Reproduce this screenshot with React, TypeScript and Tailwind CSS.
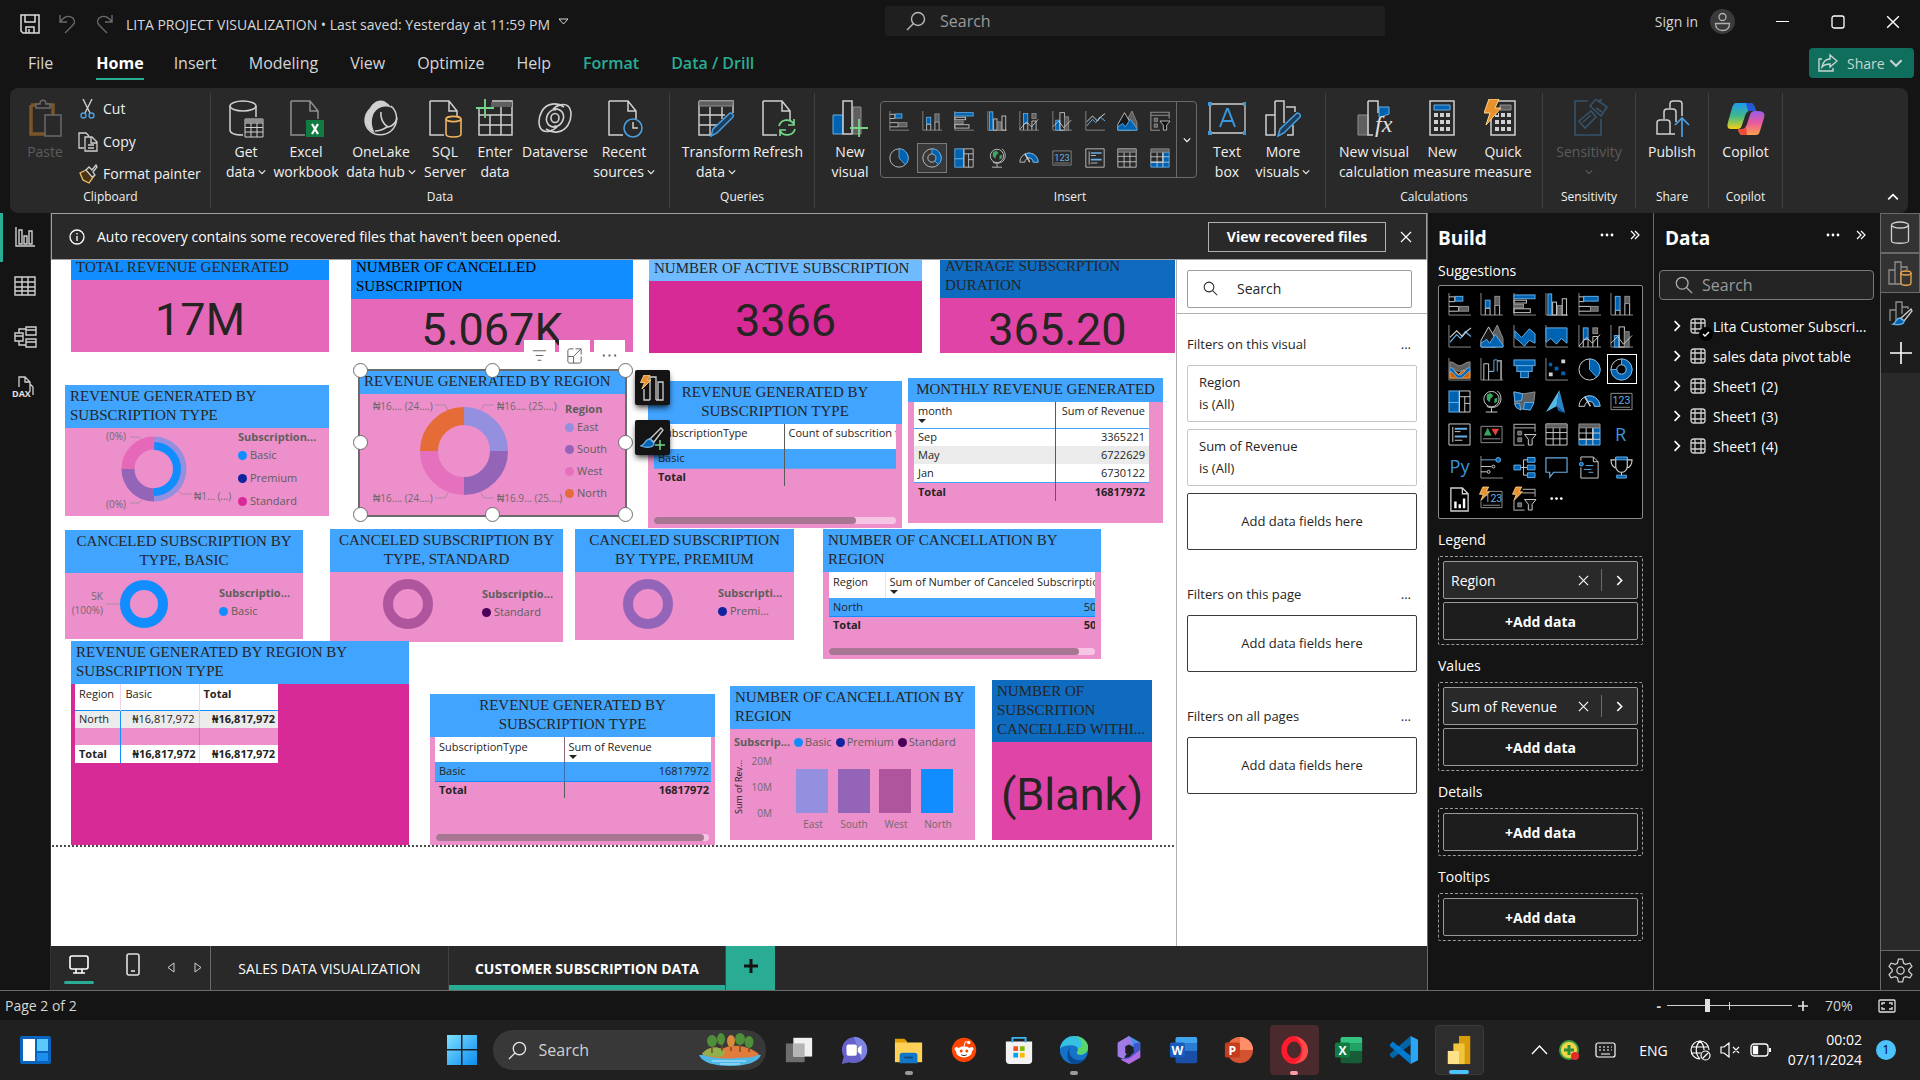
import React from "react";

const LIGHT = "#d0d0d0";
const GREY = "#8f8f8f";
const DARK = "#5f5f5f";
const BLUE = "#0063b1";
const SKY = "#69afe5";

/* ---------- small stroke icons ---------- */

function Chevron({ dir = "down", size = 8, className = "" }: { dir?: "down" | "up" | "left" | "right"; size?: number; className?: string }) {
  const d = { down: "M1 3l4 4 4-4", up: "M1 7l4-4 4 4", left: "M7 1L3 5l4 4", right: "M3 1l4 4-4 4" }[dir];
  return (
    <svg width={size} height={size} viewBox="0 0 10 10" fill="none" stroke="currentColor" strokeWidth="1.4" className={className} aria-hidden="true">
      <path d={d} />
    </svg>
  );
}

function Cross({ size = 12 }: { size?: number }) {
  return (
    <svg width={size} height={size} viewBox="0 0 12 12" fill="none" stroke="currentColor" strokeWidth="1.2" aria-hidden="true">
      <path d="M1 1l10 10M11 1L1 11" />
    </svg>
  );
}

function Lens({ size = 18, flip = false }: { size?: number; flip?: boolean }) {
  return (
    <svg width={size} height={size} viewBox="0 0 20 20" fill="none" stroke="currentColor" strokeWidth="1.4" aria-hidden="true">
      {flip ? (
        <>
          <circle cx="12" cy="8" r="6.5" />
          <path d="M7.5 12.5L1 19" />
        </>
      ) : (
        <>
          <circle cx="8" cy="8" r="6.5" />
          <path d="M12.5 12.5L19 19" />
        </>
      )}
    </svg>
  );
}

function Bolt({ x = 0, y = 0 }: { x?: number; y?: number }) {
  return <path transform={`translate(${x} ${y})`} d="M4 0h6L7.5 5H11L2 14l2.5-6.5H0.5z" fill="#e8912d" stroke="#ffd58f" strokeWidth=".9" />;
}

/* ---------- visual gallery icons, 24 x 24 ---------- */

const axis = <path d="M1 0v23h23" fill="none" stroke={GREY} />;

const VISUALS: Record<string, React.ReactNode> = {
  "Stacked bar chart": (
    <>
      {axis}
      <path d="M1 4h6v5H1M1 14h10v5H1" fill="none" stroke={LIGHT} />
      <rect x="7.500" y="3.500" width="8" height="5" fill={BLUE} stroke={SKY} />
      <rect x="11.500" y="14" width="10" height="5" fill={DARK} stroke={GREY} />
    </>
  ),
  "Stacked column chart": (
    <>
      {axis}
      <path d="M5.500 23v-7h5v7M15.500 23V13h5v10" fill="none" stroke={LIGHT} />
      <rect x="5.500" y="7.500" width="5" height="8" fill={BLUE} stroke={SKY} />
      <rect x="15.500" y="3.500" width="5" height="9.500" fill={DARK} stroke={GREY} />
    </>
  ),
  "Clustered bar chart": (
    <>
      {axis}
      <rect x="1" y="2" width="22" height="4" fill={BLUE} stroke={SKY} />
      <rect x="1" y="7.500" width="13" height="3" fill="none" stroke={LIGHT} />
      <rect x="1" y="12" width="10" height="3.500" fill={DARK} stroke={GREY} />
      <rect x="1" y="16.500" width="17" height="4" fill="none" stroke={LIGHT} />
    </>
  ),
  "Clustered column chart": (
    <>
      {axis}
      <rect x="3" y="1" width="4" height="22" fill={BLUE} stroke={SKY} />
      <rect x="8" y="9.500" width="4" height="13.500" fill="none" stroke={LIGHT} />
      <rect x="13" y="13" width="4" height="10" fill={DARK} stroke={GREY} />
      <rect x="18" y="6" width="4.500" height="17" fill="none" stroke={LIGHT} />
    </>
  ),
  "100% stacked bar chart": (
    <>
      {axis}
      <path d="M1 4h5v5H1M1 14h12v5H1" fill="none" stroke={LIGHT} />
      <rect x="6" y="3.500" width="15" height="5" fill={BLUE} stroke={SKY} />
      <rect x="13" y="14" width="8" height="5" fill={DARK} stroke={GREY} />
    </>
  ),
  "100% stacked column chart": (
    <>
      {axis}
      <path d="M5.500 23v-5h5v5M15.500 23V11h5v12" fill="none" stroke={LIGHT} />
      <rect x="5.500" y="3.500" width="5" height="14.500" fill={BLUE} stroke={SKY} />
      <rect x="15.500" y="3.500" width="5" height="7.500" fill={DARK} stroke={GREY} />
    </>
  ),
  "Line chart": (
    <>
      {axis}
      <path d="M2 18l7-8 4 4 5-7 6 5" fill="none" stroke={SKY} strokeWidth="1.2" />
      <path d="M2 13l7-7 6 6 4-5 5-4" fill="none" stroke={LIGHT} strokeWidth="1.2" />
    </>
  ),
  "Area chart": (
    <>
      <path d="M12 11l6-11 6 14v9H12z" fill={DARK} stroke={GREY} />
      <path d="M1 16L9 2l7 12v9H1z" fill="#181818" stroke={LIGHT} />
      <path d="M1 23v-4l6-4 3 4 6-9 8 11v2z" fill={BLUE} stroke={SKY} />
    </>
  ),
  "Stacked area chart": (
    <>
      {axis}
      <path d="M2 6l7 7 8-9 6 5v10l-6-3-5 6-10-9z" fill={BLUE} stroke={SKY} />
    </>
  ),
  "100% stacked area chart": (
    <>
      {axis}
      <path d="M1 3h22v16l-6-5-5 6-6-6-5 4z" fill={BLUE} stroke={SKY} />
    </>
  ),
  "Line and stacked column chart": (
    <>
      {axis}
      <path d="M5.500 23V15h5v8M15.500 23V12h5v11" fill="none" stroke={LIGHT} />
      <rect x="5.500" y="3" width="5" height="12" fill={BLUE} stroke={SKY} />
      <rect x="15.500" y="3" width="5" height="6" fill={DARK} stroke={GREY} />
      <path d="M1 22l8-9 6 6 8-9" fill="none" stroke={LIGHT} />
    </>
  ),
  "Line and clustered column chart": (
    <>
      {axis}
      <rect x="4.500" y="11" width="5" height="12" fill={BLUE} stroke={SKY} />
      <rect x="9.500" y="2" width="5.500" height="21" fill="none" stroke={LIGHT} />
      <rect x="15" y="7" width="5" height="16" fill={DARK} stroke={GREY} />
      <path d="M1 19l7-7 6 8 9-9" fill="none" stroke={LIGHT} />
    </>
  ),
  "Ribbon chart": (
    <>
      {axis}
      <path d="M2 4c5 0 6 4 10 4s6-4 11-4v6c-5 0-6 4-11 4S7 10 2 10z" fill={DARK} stroke={GREY} />
      <path d="M2 13h5l4 4 5-4h7v8H2z" fill="#c8640a" stroke="#ffb25c" />
      <path d="M2 10c5 0 5 8 10 8s6-8 11-8v4c-4 0-6 7-11 7S7 14 2 14z" fill={BLUE} stroke={SKY} />
    </>
  ),
  "Waterfall chart": (
    <>
      {axis}
      <path d="M4 23V6h5v8h5M9 14v9" fill="none" stroke={LIGHT} />
      <path d="M10.500 14h4V2h3.500v12" fill="none" stroke={SKY} />
      <path d="M18 3h4v20" fill="none" stroke={GREY} strokeWidth="2" />
    </>
  ),
  Funnel: (
    <>
      <rect x="1" y="2" width="22" height="6" fill={BLUE} stroke={SKY} />
      <rect x="4" y="8" width="16" height="6" fill={BLUE} stroke={SKY} />
      <rect x="8" y="14" width="8" height="6.500" fill={BLUE} stroke={SKY} />
    </>
  ),
  "Scatter chart": (
    <>
      {axis}
      <path d="M4 5h3.500v3.500H4zM10 9h4v4h-4zM17 14h4v4h-4z" fill={BLUE} />
      <path d="M17 1.500h4v4h-4zM4 15h4v4H4z" fill={LIGHT} />
    </>
  ),
  "Pie chart": (
    <>
      <circle cx="12" cy="12" r="11" fill="none" stroke={LIGHT} />
      <path d="M12 1a11 11 0 0 1 7.500 19L12 12z" fill={BLUE} stroke={SKY} />
    </>
  ),
  "Donut chart": (
    <>
      <circle cx="12" cy="12" r="11" fill="none" stroke={LIGHT} />
      <circle cx="12" cy="12" r="5" fill="none" stroke={LIGHT} />
      <path d="M12 1a11 11 0 1 1-11 11h6a5 5 0 1 0 5-5z" fill={BLUE} stroke={SKY} />
    </>
  ),
  "Donut outline": (
    <>
      <circle cx="12" cy="12" r="11" fill="none" stroke={LIGHT} />
      <circle cx="12" cy="12" r="5" fill="none" stroke={LIGHT} />
      <path d="M12 1a11 11 0 0 1 7.500 19l-4-4.500A5 5 0 0 0 12 7z" fill={BLUE} stroke={SKY} />
    </>
  ),
  Treemap: (
    <>
      <rect x="1" y="1" width="10.500" height="12" fill={BLUE} stroke={SKY} />
      <rect x="1" y="13" width="10.500" height="10" fill={BLUE} stroke={SKY} />
      <path d="M12 1h11v22H12zM12 7h11M17.500 7v16M17.500 14H23" fill="none" stroke={LIGHT} />
    </>
  ),
  Map: (
    <>
      <circle cx="12" cy="9.500" r="8" fill="none" stroke={LIGHT} />
      <path d="M7 5l4-2 3 3-3 3-1 4-3-3zM15 9l3-1v4l-3 2z" fill="#3ba55c" />
      <path d="M18 1c5 4 5 11 1 15-4 3-9 3-12 1M12 19v4M6 23h12" fill="none" stroke={LIGHT} />
    </>
  ),
  "Filled map": (
    <>
      <path d="M1 2l10 2 12-2-1 9-4 9H7L2 16z" fill={DARK} stroke={GREY} />
      <path d="M1 2l9 2-1 7-7 1zM12 13h10l-4 8-7-1z" fill={BLUE} stroke={SKY} />
      <path d="M2 14h5l1 7-5-3z" fill={BLUE} stroke={SKY} />
    </>
  ),
  "Azure map": (
    <>
      <path d="M15 0L1 23l11-6z" fill="#53b9e6" />
      <path d="M15 0l6 24-9-7z" fill="#2a86c8" />
      <path d="M12 17l9 7-7-2z" fill="#0f5fa6" />
    </>
  ),
  Gauge: (
    <>
      <path d="M1 17a11 11 0 0 1 22 0h-6a5 5 0 0 0-10 0z" fill="none" stroke={LIGHT} />
      <path d="M7 7.500A11 11 0 0 1 23 17h-6a5 5 0 0 0-7-5z" fill={BLUE} stroke={SKY} />
      <path d="M7 7l6 10" stroke={LIGHT} strokeWidth="1.600" />
    </>
  ),
  Card: (
    <>
      <path d="M1 3.500h22v17H1z" fill="none" stroke={GREY} />
      <path d="M3 18h18" stroke={GREY} />
      <text x="12" y="15" textAnchor="middle" fontSize="11" fontFamily="Roboto, sans-serif" fill={SKY}>123</text>
    </>
  ),
  "Multi-row card": (
    <>
      <path d="M1 1h22v22H1zM5 4v16M7 9h6M7 18h8" fill="none" stroke={LIGHT} />
      <path d="M7 6h13M7 14h13" fill="none" stroke={SKY} strokeWidth="2" />
    </>
  ),
  KPI: (
    <>
      <path d="M1 3.500h22v17H1zM3 16.500h18" fill="none" stroke={GREY} />
      <path d="M8 5l4 8H4z" fill="#3ba55c" />
      <path d="M12 6h8l-4 7z" fill="#e8413c" />
    </>
  ),
  Slicer: (
    <>
      <path d="M23 9V1.500H1V23h11M1 5h22" fill="none" stroke={GREY} strokeWidth="1.300" />
      <path d="M5 8.500h4v4H5zM5 15.500h4v4H5z" fill={DARK} stroke={GREY} />
      <path d="M12 12h12l-4 5v6h-4v-6z" fill="#111" stroke={LIGHT} />
    </>
  ),
  Table: (
    <>
      <path d="M1 1h22v22H1zM1 10h22M1 16.500h22M8.500 5v18M15.500 5v18" fill="none" stroke={LIGHT} />
      <path d="M1 1h22v4H1z" fill={DARK} stroke={GREY} />
    </>
  ),
  Matrix: (
    <>
      <path d="M15.500 5H23v18H1v-6h14.500z" fill={BLUE} stroke={SKY} />
      <path d="M1 5v12h14.500V5M1 10.500h22M8.500 5v18M1 17h22M15.500 5v18" fill="none" stroke={LIGHT} />
      <path d="M1 1h22v4H1z" fill={DARK} stroke={GREY} />
    </>
  ),
  "R script visual": (
    <text x="11" y="19" textAnchor="middle" fontSize="19" fontFamily="Open Sans, sans-serif" fill="#3a96dd">R</text>
  ),
  "Python visual": (
    <text x="12" y="18" textAnchor="middle" fontSize="19" fontFamily="Open Sans, sans-serif" fill="#3a96dd">Py</text>
  ),
  "Key influencers": (
    <>
      {axis}
      <path d="M1 4h16" stroke={SKY} />
      <circle cx="19" cy="4" r="2.500" fill={BLUE} stroke={SKY} />
      <path d="M1 11h11M1 16.500h6" stroke={LIGHT} />
      <circle cx="14" cy="11" r="1.500" fill="none" stroke={LIGHT} />
      <circle cx="9" cy="16.500" r="1.500" fill="none" stroke={LIGHT} />
    </>
  ),
  "Decomposition tree": (
    <>
      <path d="M8 12h7M11 4v16M11 4h4M11 20h4" fill="none" stroke={LIGHT} />
      <path d="M1 9.500h7v5H1zM15 1.500h8v5h-8zM15 9.500h8v5h-8zM15 17.500h8v5h-8z" fill={BLUE} stroke={SKY} />
    </>
  ),
  "Q&A": <path d="M1 2h22v15H9l-4 5v-5H1z" fill="none" stroke={SKY} strokeWidth="1.200" />,
  Narrative: (
    <>
      <path d="M3 5V1h13l5 5v17H3V12M16 1v5h5" fill="none" stroke={LIGHT} />
      <circle cx="3.500" cy="8.500" r="2" fill={BLUE} stroke={SKY} />
      <path d="M8 10h8M6 14h8M11 17h5" stroke={SKY} />
    </>
  ),
  Metrics: (
    <>
      <path d="M6 2h12v9a6 6 0 0 1-12 0zM6 4H1c0 6 2 8 6 9M18 4h5c0 6-2 8-6 9M12 17v4" fill="none" stroke={LIGHT} strokeWidth="1.200" />
      <path d="M6 1h12v3H6zM7 20h10v3H7z" fill={BLUE} stroke={SKY} />
    </>
  ),
  "Paginated report": (
    <>
      <path d="M3 0h12l6 6v18H3zM15 0v6h6" fill="none" stroke={LIGHT} strokeWidth="1.400" />
      <path d="M6.500 14h2.500v7H6.500zM11 17h2.500v4H11zM15.500 11H18v10h-2.500z" fill="#fff" />
    </>
  ),
  "New card": (
    <>
      <path d="M9 3.500h14v17H1V14M3 18h18" fill="none" stroke={GREY} />
      <text x="14" y="15" textAnchor="middle" fontSize="11" fontFamily="Roboto, sans-serif" fill={SKY}>123</text>
      <Bolt x={-1} y={-1} />
    </>
  ),
  "New slicer": (
    <>
      <path d="M10 1.500h13V9M1 13v10h11M10 5h13" fill="none" stroke={GREY} strokeWidth="1.300" />
      <path d="M5 15.500h4v4H5z" fill={DARK} stroke={GREY} />
      <path d="M12 12h12l-4 5v6h-4v-6z" fill="#111" stroke={LIGHT} />
      <Bolt x={-1} y={-1} />
    </>
  ),
  "More visuals": (
    <g fill="#fff">
      <circle cx="7" cy="11" r="1.400" />
      <circle cx="12" cy="11" r="1.400" />
      <circle cx="17" cy="11" r="1.400" />
    </g>
  ),
};

function VisualIcon({ name, size }: { name: string; size: number }) {
  return (
    <svg width={size} height={size} viewBox="0 0 24 24" aria-hidden="true" overflow="visible">
      {VISUALS[name]}
    </svg>
  );
}

/* ---------- ribbon icons, 38 x 40 ---------- */

const page = <path d="M4 2h19l8 10v10M23 2v10h8M4 2v34h14" fill="none" stroke={LIGHT} strokeWidth="1.500" />;
const pencil = <path d="M14 37l2-7L33 14c3 0 4 3 3 4L20 34z" fill="#1c3f5f" stroke="#4a9fe0" strokeWidth="1.500" />;
const calc = (
  <>
    <path d="M7 2h24v34H7z" fill="none" stroke={LIGHT} strokeWidth="1.500" />
    <path d="M11 14h4v4h-4zM17 14h4v4h-4zM23 14h4v4h-4zM11 21h4v4h-4zM17 21h4v4h-4zM23 21h4v4h-4zM11 28h4v4h-4zM17 28h4v4h-4zM23 28h4v4h-4z" fill={LIGHT} />
  </>
);

const RIBBON: Record<string, React.ReactNode> = {
  paste: (
    <>
      <path d="M5 6h22v12M5 6v29h14" fill="none" stroke="#7a5529" strokeWidth="3.500" />
      <path d="M10 9V5h4c0-5 6-5 6 0h4v4z" fill="#292929" stroke="#6a6a6a" strokeWidth="1.500" />
      <path d="M19 16h16v21H19z" fill="#292929" stroke="#6a6a6a" strokeWidth="1.500" />
    </>
  ),
  getdata: (
    <>
      <path d="M3 7v24c0 3 5 5 13 5M29 7v11" fill="none" stroke={LIGHT} strokeWidth="1.500" />
      <ellipse cx="16" cy="7" rx="13" ry="5" fill="none" stroke={LIGHT} strokeWidth="1.500" />
      <path d="M18 20h18v18H18zM18 24h18M18 28.500h18M18 33h18M24 24v14M30 24v14" fill="none" stroke={LIGHT} />
      <path d="M18 20h18v4H18z" fill={GREY} />
    </>
  ),
  excel: (
    <>
      <path d="M4 2h19l8 10v8M23 2v10h8M4 2v34h14" fill="none" stroke={GREY} strokeWidth="1.500" />
      <path d="M19 21h18v17H19z" fill="#107c41" />
      <path d="M25 25l6 10M31 25l-6 10" stroke="#fff" strokeWidth="2.200" />
    </>
  ),
  onelake: (
    <>
      <path d="M8 10C2 16 1 26 8 32c5 5 15 5 21 0 8-7 7-19 0-25" fill="none" stroke={LIGHT} strokeWidth="1.600" />
      <path d="M7 11C10 3 17 0 22 2c4 2 8 7 8 7-8-3-14-1-18 5-3 6-3 13 1 20C4 31 0 20 7 11z" fill={LIGHT} />
      <path d="M19 13c-1 6 2 12 7 15 5-1 8-5 9-9M13 32c3 0 9-2 12-4" fill="none" stroke={LIGHT} strokeWidth="1.600" />
    </>
  ),
  sql: (
    <>
      {page}
      <path d="M20 20v15c0 4 15 4 15 0V20" fill="#292929" stroke="#f0b35e" strokeWidth="1.600" />
      <ellipse cx="27.500" cy="20" rx="7.500" ry="2.600" fill="#292929" stroke="#f0b35e" strokeWidth="1.600" />
    </>
  ),
  enter: (
    <>
      <path d="M3 10v26h33V2H16M3 16h33M3 26h33M14 16v20M25 8v28" fill="none" stroke={LIGHT} strokeWidth="1.500" />
      <path d="M15 3h21v5H15z" fill={DARK} />
      <path d="M9 0v19M0 9h18" stroke="#74d88a" strokeWidth="1.800" />
    </>
  ),
  dataverse: (
    <g fill="none" stroke={LIGHT} strokeWidth="1.600">
      <path d="M28 8C21 3 11 4 6 12c-4 7-4 15 0 19 4 3 11 1 15-3" />
      <path d="M10 30c7 5 17 4 22-4 4-7 4-15 0-19-4-3-11-1-15 3" />
      <path d="M21 28c-9 1-13-6-9-13 2-3 5-5 8-4" />
      <path d="M17 10c9-1 13 6 9 13-2 3-5 5-8 4" />
      <ellipse cx="19" cy="19" rx="4" ry="4.500" />
    </g>
  ),
  recent: (
    <>
      {page}
      <circle cx="28" cy="29" r="9" fill="#292929" stroke="#4a9fe0" strokeWidth="1.600" />
      <path d="M28 23v6h5" fill="none" stroke={LIGHT} strokeWidth="1.500" />
    </>
  ),
  transform: (
    <>
      <path d="M2 2h34v12M2 2v34h13M2 16h26M2 26h18M13 8v28M25 8v12" fill="none" stroke={LIGHT} strokeWidth="1.400" />
      <path d="M2 2h34v5H2z" fill={DARK} stroke={GREY} />
      {pencil}
    </>
  ),
  refresh: (
    <>
      {page}
      <path d="M20 27c2-7 11-8 15-2M35 20v6h-6M36 30c-2 7-11 8-15 2M21 37v-6h6" fill="none" stroke="#74d88a" strokeWidth="1.700" />
    </>
  ),
  newvisual: (
    <>
      <path d="M22 8h8v27h-8z" fill={DARK} stroke={GREY} />
      <path d="M2 16h10v19H2z" fill={BLUE} stroke={SKY} />
      <path d="M12 2h9v33h-9z" fill="#292929" stroke={LIGHT} strokeWidth="1.500" />
      <path d="M28 20v18M19 29h18" stroke="#74d88a" strokeWidth="1.800" />
    </>
  ),
  textbox: (
    <>
      <path d="M2 5h35v29H2z" fill="none" stroke={LIGHT} strokeWidth="1.300" />
      <path d="M0 3h4v4H0zM35 3h4v4h-4zM0 32h4v4H0zM35 32h4v4h-4z" fill="#3a96dd" />
      <path d="M12 28l7-18h1l7 18M14.500 22h10" fill="none" stroke="#3a96dd" strokeWidth="2" />
    </>
  ),
  morevisuals: (
    <>
      <path d="M2 16h9v20H2zM11 2h9v22M11 16V2M22 8h9v5M29 26v10h-6" fill="none" stroke={LIGHT} strokeWidth="1.500" />
      {pencil}
    </>
  ),
  newcalc: (
    <>
      <path d="M3 16h10v20H3z" fill={DARK} stroke={GREY} />
      <path d="M13 2h10v12M13 2v34h5" fill="none" stroke={LIGHT} strokeWidth="1.500" />
      <path d="M24 8h10v7l-8 3h-2z" fill={BLUE} stroke={SKY} />
      <text x="20" y="33" fontSize="24" fontStyle="italic" fontFamily="Liberation Serif, serif" fill="#e0e0e0">fx</text>
    </>
  ),
  newmeasure: (
    <>
      {calc}
      <path d="M11 6h16v5H11z" fill={BLUE} stroke={SKY} />
    </>
  ),
  quick: (
    <>
      {calc}
      <path d="M16 6h11v5H16z" fill={DARK} stroke={GREY} />
      <path d="M0 0h14v16H6v10H0z" fill="#292929" />
      <path d="M5 0h10l-4 9h6L2 26l4-12H0z" fill="#e8912d" stroke="#ffd58f" />
    </>
  ),
  sensitivity: (
    <g fill="none" stroke="#35536b" strokeWidth="1.600">
      <path d="M18 2H5v34h26V20" />
      <path d="M9 22l12-10 5 6-11 11zM13 23l8-7" />
      <path d="M20 7l6-7 11 8-6 9zM28 3l4-3M26 9l6 4" />
    </g>
  ),
  publish: (
    <>
      <path d="M4 35V24c0-2 1-3 3-3h7c2 0 3 1 3 3v11zM11 20v-7c0-2 1-3 3-3h6c2 0 3 1 3 3v10M17 35h5M17 9V5c0-2 1-3 3-3h6c2 0 3 1 3 3v12" fill="none" stroke={LIGHT} strokeWidth="1.500" />
      <path d="M29 38V19M22 26l7-7 7 7" fill="none" stroke="#4a9fe0" strokeWidth="1.700" />
    </>
  ),
  copilot: (
    <>
      <defs>
        <linearGradient id="cpA" x1="0" y1="0" x2="0" y2="1">
          <stop offset="0" stopColor="#1e9bf0" />
          <stop offset=".5" stopColor="#3fb98a" />
          <stop offset="1" stopColor="#f5d116" />
        </linearGradient>
        <linearGradient id="cpB" x1="0" y1="0" x2="0" y2="1">
          <stop offset="0" stopColor="#9a5bea" />
          <stop offset=".5" stopColor="#ea5a9b" />
          <stop offset="1" stopColor="#ffa14a" />
        </linearGradient>
      </defs>
      <path d="M9 4h14c3 0 4 2 5 5l1 3h-6c-3 0-4 2-5 5l-3 9c-1 3-2 4-5 4H4c-4 0-4-3-3-7L5 9c1-3 2-5 4-5z" fill="url(#cpA)" />
      <path d="M19 4h4c3 0 4 2 5 5l1 3h-8z" fill="#2458d6" />
      <path d="M30 12c8 0 8 3 7 7l-4 13c-1 3-2 4-4 4H16c-3 0-4-2-5-6h4c3 0 4-2 5-5l3-9c1-3 2-4 5-4z" fill="url(#cpB)" />
      <path d="M11 30h4c2 0 3-1 4-3l1 9h-4c-3 0-4-2-5-6z" fill="#f04b3a" />
    </>
  ),
};

function RibbonItem({ icon, lines, menu, width, dim }: { icon: string; lines: string[]; menu?: boolean; width: string; dim?: boolean }) {
  return (
    <button type="button" className={`flex flex-col items-center shrink-0 pt-[11px] ${width} ${dim ? "text-[#5c5c5c]" : "text-[#f0f0f0]"}`}>
      <svg width="38" height="40" viewBox="0 0 38 40" className="shrink-0" aria-hidden="true">
        {RIBBON[icon]}
      </svg>
      <span className="mt-[3px] flex flex-col items-center text-[14px] leading-[20px] whitespace-nowrap">
        {lines.map((l, i) => (
          <span key={l} className="flex items-center gap-[3px]">
            {l}
            {menu && i === lines.length - 1 && lines.length > 1 && <Chevron />}
          </span>
        ))}
        {menu && lines.length === 1 && <Chevron className="mt-[6px]" />}
      </span>
    </button>
  );
}

function RibbonGroup({ label, width, children }: { label: string; width: string; children: React.ReactNode }) {
  return (
    <section aria-label={label} className={`relative flex flex-col shrink-0 border-r border-[#404040] my-[5px] ${width}`}>
      <div className="flex -mt-[5px] h-[99px] justify-start">{children}</div>
      <div className="text-center text-[12px] leading-[20px] text-[#f0f0f0]">{label}</div>
    </section>
  );
}

const GALLERY = [
  "Stacked bar chart", "Stacked column chart", "Clustered bar chart", "Clustered column chart", "Line and stacked column chart", "Line and clustered column chart", "Line chart", "Area chart", "Slicer",
  "Pie chart", "Donut outline", "Treemap", "Map", "Gauge", "Card", "Multi-row card", "Table", "Matrix",
];

function TitleBar() {
  return (
    <header className="grid grid-cols-[885fr_500fr_535fr] h-[43px] items-start text-[#d6d6d6]">
      <div className="flex items-center h-[44px] pl-[20px] pt-1">
        <button type="button" aria-label="Save" className="w-[38px]">
          <svg width="20" height="20" viewBox="0 0 20 20" fill="none" stroke="#dcdcdc" strokeWidth="1.500">
            <path d="M1 1h18v18H3l-2-2zM5 1v7h10V1M6 19v-6h8v6M9 15v4" />
          </svg>
        </button>
        <button type="button" aria-label="Undo" className="w-[38px] text-[#6a6a6a]">
          <svg width="18" height="20" viewBox="0 0 18 20" fill="none" stroke="currentColor" strokeWidth="1.400">
            <path d="M2 1v7h7M2 8c4-6 9-7 13-4 3 4 1 6-1 8l-7 7" />
          </svg>
        </button>
        <button type="button" aria-label="Redo" className="w-[30px] text-[#6a6a6a]">
          <svg width="18" height="20" viewBox="0 0 18 20" fill="none" stroke="currentColor" strokeWidth="1.400">
            <path d="M16 1v7H9M16 8C12 2 7 1 3 4c-3 4-1 6 1 8l7 7" />
          </svg>
        </button>
        <button type="button" className="flex items-center gap-2 text-[14px] whitespace-nowrap">
          LITA PROJECT VISUALIZATION • Last saved: Yesterday at 11:59 PM
          <svg width="11" height="8" viewBox="0 0 11 8" fill="none" stroke="currentColor" className="-mt-1">
            <path d="M1 1h9L5.500 6z" />
          </svg>
        </button>
      </div>
      <label className="mt-[6px] flex h-[30px] items-center rounded-[2px] bg-[#1f1f1f] pl-[21px] text-[#b8b8b8]">
        <Lens size={20} flip />
        <input type="search" aria-label="Search commands" placeholder="Search" className="ml-[14px] min-w-0 flex-1 bg-transparent text-[16px] outline-none placeholder:text-[#9a9a9a]" />
      </label>
      <div className="flex h-[43px] items-center justify-end">
        <button type="button" className="mr-[12px] text-[14px]">Sign in</button>
        <button type="button" aria-label="Account" className="mr-[20px] flex size-[25px] items-center justify-center rounded-full bg-[#3a3a3a]">
          <svg width="17" height="20" viewBox="0 0 17 20" fill="none" stroke="#b0b0b0" strokeWidth="1.300">
            <circle cx="8.500" cy="5" r="3.500" />
            <path d="M1.500 11.500h14c0 5-3 7-7 7s-7-2-7-7z" />
          </svg>
        </button>
        <button type="button" aria-label="Minimize" className="flex w-[55px] justify-center">
          <svg width="13" height="13" viewBox="0 0 13 13" stroke="#fff"><path d="M0 6.500h13" /></svg>
        </button>
        <button type="button" aria-label="Maximize" className="flex w-[55px] justify-center">
          <svg width="14" height="14" viewBox="0 0 14 14" fill="none" stroke="#fff" strokeWidth="1.300"><rect x="1" y="1" width="12" height="12" rx="2" /></svg>
        </button>
        <button type="button" aria-label="Close" className="flex w-[55px] justify-center text-white">
          <Cross size={14} />
        </button>
      </div>
    </header>
  );
}

function TabStrip() {
  const tabs = ["File", "Home", "Insert", "Modeling", "View", "Optimize", "Help", "Format", "Data / Drill"];
  return (
    <nav aria-label="Ribbon tabs" className="flex h-[45px] items-start pl-[28px] pr-[6px]">
      {tabs.map((t) => (
        <a
          key={t}
          href={`#${t}`}
          className={
            t === "Home"
              ? "ml-[11px] mr-[30px] border-b-2 border-[#2aac94] pt-[7px] pb-[2px] text-[16px] leading-[26px] font-bold text-white"
              : t === "Format" || t === "Data / Drill"
                ? "mr-[32px] pt-[7px] text-[16px] leading-[26px] font-semibold text-[#2aac94]"
                : "mr-[32px] pt-[7px] text-[16px] leading-[26px] text-[#d6d6d6]"
          }
        >
          {t}
        </a>
      ))}
      <button type="button" className="ml-auto mt-[5px] flex h-[30px] w-[105px] items-center rounded-[4px] bg-[#0f6e5c] pl-[9px] text-[14px] text-[#c8d6d2]">
        <svg width="20" height="20" viewBox="0 0 20 20" fill="none" stroke="currentColor" strokeWidth="1.400">
          <path d="M4 6H1v12h14v-3M12 2l7 6-7 6v-3c-4 0-6 1-8 3 1-5 4-8 8-8z" />
        </svg>
        <span className="ml-[9px] mr-[4px]">Share</span>
        <Chevron size={14} />
      </button>
    </nav>
  );
}

function Ribbon() {
  return (
    <div className="ml-[10px] mr-[12px] flex h-[125px] rounded-[8px] bg-[#292929] pl-px">
      <RibbonGroup label="Clipboard" width="w-[200px]">
        <span className="w-px shrink-0" />
        <RibbonItem icon="paste" lines={["Paste"]} width="w-[66px]" dim />
        <div className="flex flex-col pt-px text-[14px] leading-[20px] text-[#f0f0f0]">
          <button type="button" className="flex h-[33px] items-center gap-[5px] pt-[6px]">
            <svg width="20" height="20" viewBox="0 0 20 20" fill="none" strokeWidth="1.400">
              <path d="M5 0l7 14M14 0L7 14" stroke={LIGHT} />
              <circle cx="5.500" cy="16.500" r="2.500" stroke="#4a9fe0" />
              <circle cx="13.500" cy="16.500" r="2.500" stroke="#4a9fe0" />
            </svg>
            Cut
          </button>
          <button type="button" className="flex h-[33px] items-center gap-[5px] pt-[6px]">
            <svg width="20" height="20" viewBox="0 0 20 20" fill="none" stroke={LIGHT} strokeWidth="1.300">
              <path d="M6 16H1V1h7l3 3M7 5h7l5 5v9H7zM13 5v6h6M10 13h6M10 16h6" />
            </svg>
            Copy
          </button>
          <button type="button" className="flex h-[32px] items-center gap-[5px] pt-[6px] whitespace-nowrap">
            <svg width="20" height="20" viewBox="0 0 20 20" fill="none" strokeWidth="1.300">
              <path d="M2 9l8-4 6 7-5 7-6-3z" fill="#4a3413" stroke="#f3c06a" />
              <path d="M8 6l3-3 3 3 4-5 1 2-4 5 2 3-3 2z" fill="#292929" stroke={LIGHT} />
            </svg>
            Format painter
          </button>
        </div>
      </RibbonGroup>
      <RibbonGroup label="Data" width="w-[459px]">
        <span className="w-[5px] shrink-0" />
        <RibbonItem icon="getdata" lines={["Get", "data"]} menu width="w-[60px]" />
        <RibbonItem icon="excel" lines={["Excel", "workbook"]} width="w-[60px]" />
        <RibbonItem icon="onelake" lines={["OneLake", "data hub"]} menu width="w-[90px]" />
        <RibbonItem icon="sql" lines={["SQL", "Server"]} width="w-[38px]" />
        <RibbonItem icon="enter" lines={["Enter", "data"]} width="w-[62px]" />
        <RibbonItem icon="dataverse" lines={["Dataverse"]} width="w-[58px]" />
        <RibbonItem icon="recent" lines={["Recent", "sources"]} menu width="w-[80px]" />
      </RibbonGroup>
      <RibbonGroup label="Queries" width="w-[145px]">
        <span className="w-[4px] shrink-0" />
        <RibbonItem icon="transform" lines={["Transform", "data"]} menu width="w-[84px]" />
        <RibbonItem icon="refresh" lines={["Refresh"]} width="w-[40px]" />
      </RibbonGroup>
      <RibbonGroup label="Insert" width="w-[511px]">
        <span className="w-[5px] shrink-0" />
        <RibbonItem icon="newvisual" lines={["New", "visual"]} width="w-[60px]" />
        <div className="mt-[13px] flex h-[77px] w-[317px] shrink-0 rounded-[4px] border border-[#6a6a6a]">
          <div className="grid flex-1 grid-cols-9 grid-rows-2 py-px pl-[2px]">
            {GALLERY.map((g, i) => (
              <button
                key={g}
                type="button"
                aria-label={g}
                className={i === 10 ? "m-auto flex size-[30px] items-center justify-center border border-[#7a7a7a] bg-[#383838]" : "m-auto flex size-[30px] items-center justify-center"}
              >
                <VisualIcon name={g} size={20} />
              </button>
            ))}
          </div>
          <button type="button" aria-label="More visual types" className="flex w-[20px] items-center justify-center border-l border-[#6a6a6a] text-white">
            <Chevron />
          </button>
        </div>
        <RibbonItem icon="textbox" lines={["Text", "box"]} width="w-[60px]" />
        <RibbonItem icon="morevisuals" lines={["More", "visuals"]} menu width="w-[52px]" />
      </RibbonGroup>
      <RibbonGroup label="Calculations" width="w-[217px]">
        <span className="w-[5px] shrink-0" />
        <RibbonItem icon="newcalc" lines={["New visual", "calculation"]} width="w-[86px]" />
        <RibbonItem icon="newmeasure" lines={["New", "measure"]} width="w-[50px]" />
        <RibbonItem icon="quick" lines={["Quick", "measure"]} width="w-[72px]" />
      </RibbonGroup>
      <RibbonGroup label="Sensitivity" width="w-[93px]">
        <RibbonItem icon="sensitivity" lines={["Sensitivity"]} menu width="w-[92px]" dim />
      </RibbonGroup>
      <RibbonGroup label="Share" width="w-[73px]">
        <RibbonItem icon="publish" lines={["Publish"]} width="w-[72px]" />
      </RibbonGroup>
      <RibbonGroup label="Copilot" width="w-[74px]">
        <RibbonItem icon="copilot" lines={["Copilot"]} width="w-[73px]" />
      </RibbonGroup>
      <button type="button" aria-label="Collapse ribbon" className="mr-[9px] mb-[10px] ml-auto self-end text-white">
        <Chevron dir="up" size={12} />
      </button>
    </div>
  );
}

function LeftNav() {
  const items: [string, React.ReactNode][] = [
    ["Report view", <path key="a" d="M1 0v19h19M4 3h3v14H4zM9 9h3v8H9zM14 4h3v13h-3z" />],
    ["Table view", <path key="b" d="M1 1h20v18H1zM1 6h20M1 11h20M1 15h20M8 1v18M14 1v18" />],
    ["Model view", <path key="c" d="M12 1h10v8H12zM12 4h10M12 13h10v8H12zM12 16h10M1 7h8v8H1zM1 10h8M5 7V3h7M5 15v4h7" />],
  ];
  return (
    <nav aria-label="Views" className="w-[51px] shrink-0 border-r border-[#333] bg-[#141414]">
      {items.map(([label, icon], i) => (
        <button key={label} type="button" aria-label={label} className={i === 0 ? "flex h-[49px] w-full items-center border-l-[3px] border-[#2aac94] pl-[12px]" : "flex h-[50px] w-full items-center pl-[14px]"}>
          <svg width="23" height="22" viewBox="0 0 23 22" fill="none" stroke={LIGHT} strokeWidth="1.400">{icon}</svg>
        </button>
      ))}
      <button type="button" aria-label="DAX query view" className="flex h-[50px] w-full items-center pl-[12px]">
        <svg width="24" height="24" viewBox="0 0 24 24" fill="none" stroke={LIGHT} strokeWidth="1.300">
          <path d="M7 12V2h6l5 5v9M13 2v5h5M18 9l3 3v8" />
          <text x="0" y="22" fontSize="9" fontWeight="700" fontFamily="Open Sans, sans-serif" fill="#e0e0e0" stroke="none">DAX</text>
        </svg>
      </button>
    </nav>
  );
}

/* ---------- report canvas ---------- */

function Visual({ place, title, head = "bg-[#41a4ff]", body = "bg-[#ec8fcb]", center, black, children }: {
  place: string; title: string; head?: string; body?: string; center?: boolean; black?: boolean; children?: React.ReactNode;
}) {
  return (
    <article className={`absolute flex flex-col ${place} ${body}`}>
      <h2 className={`px-[5px] pt-[2px] pb-[3px] font-['Liberation_Serif',serif] text-[15px] leading-[19px] whitespace-pre ${head} ${center ? "text-center" : ""} ${black ? "text-black" : "text-[#252423]"}`}>
        {title}
      </h2>
      {children}
    </article>
  );
}

function Big({ children }: { children: React.ReactNode }) {
  return <p className="flex flex-1 items-center justify-center pt-[8px] font-[Roboto,sans-serif] text-[45px] leading-[46px] text-[#252423]">{children}</p>;
}

function Arc({ cx, cy, r, w, color, from = 0, span = 1 }: { cx: number; cy: number; r: number; w: number; color: string; from?: number; span?: number }) {
  const c = 2 * Math.PI * r;
  return <circle cx={cx} cy={cy} r={r} fill="none" stroke={color} strokeWidth={w} strokeDasharray={`${span * c} ${c}`} transform={`rotate(${from * 360 - 90} ${cx} ${cy})`} />;
}

function Legend({ title, items, className, gap }: { title: string; items: [string, string][]; className: string; gap: string }) {
  return (
    <div className={`text-[11px] leading-[16px] whitespace-nowrap text-[#605e5c] ${className}`}>
      <div className="font-bold">{title}</div>
      <ul className={`mt-[2px] flex flex-col ${gap}`}>
        {items.map(([name, dot]) => (
          <li key={name} className="flex items-center gap-[3px]">
            <span className={`size-[9px] rounded-full ${dot}`} />
            {name}
          </li>
        ))}
      </ul>
    </div>
  );
}

const label = { fontSize: 10, fill: "#706a6e", fontFamily: "Open Sans, sans-serif" };

function Scroll({ thumb }: { thumb: string }) {
  return (
    <div className="mx-[6px] mt-auto mb-[4px] h-[7px] rounded-full bg-[#f6c4e4]">
      <div className={`h-[7px] rounded-full bg-[#a87592] ${thumb}`} />
    </div>
  );
}

function SortMark() {
  return <span className="block h-0 w-[7px] border-x-[4px] border-t-[4px] border-x-transparent border-t-[#252423]" />;
}

function Canvas() {
  return (
    <main className="relative min-w-0 flex-1 overflow-hidden bg-white">
      <Visual place="left-[20px] top-[-4px] h-[96px] w-[258px]" title="TOTAL REVENUE GENERATED" head="bg-[#118dff]" body="bg-[#e669b9]">
        <Big>17M</Big>
      </Visual>
      <Visual place="left-[300px] top-[-4px] h-[96px] w-[282px]" title={"NUMBER OF CANCELLED\nSUBSCRIPTION"} head="bg-[#118dff]" body="bg-[#e669b9]" black>
        <Big>5.067K</Big>
      </Visual>
      <Visual place="left-[598px] top-[-3px] h-[96px] w-[273px]" title="NUMBER OF ACTIVE SUBSCRIPTION" head="bg-[#70bbff]" body="bg-[#d82a96]">
        <Big>3366</Big>
      </Visual>
      <Visual place="left-[889px] top-[-5px] h-[98px] w-[235px]" title={"AVERAGE SUBSCRPTION\nDURATION"} head="bg-[#0e6bc0]" body="bg-[#e044a7]">
        <Big>365.20</Big>
      </Visual>

      <Visual place="left-[14px] top-[125px] h-[131px] w-[264px]" title={"REVENUE GENERATED BY\nSUBSCRIPTION TYPE"}>
        <div className="flex flex-1">
          <svg width="173" height="88" viewBox="0 0 173 88" role="img" aria-label="Revenue by subscription type">
            <Arc cx={89} cy={41} r={26} w={13} color="#958fdf" from={0} span={0.5} />
            <Arc cx={89} cy={41} r={23} w={8} color="#118dff" from={0} span={0.5} />
            <Arc cx={89} cy={41} r={26} w={13} color="#9464b9" from={0.5} span={0.25} />
            <Arc cx={89} cy={41} r={26} w={13} color="#e569b8" from={0.75} span={0.25} />
            <path d="M65 9h9l3 3M65 75h9l3-3M127 66h-10l-4-3" fill="none" stroke="#b08aa4" />
            <text x="41" y="12" {...label}>(0%)</text>
            <text x="41" y="80" {...label}>(0%)</text>
            <text x="129" y="72" {...label}>₦1... (...)</text>
          </svg>
          <Legend title="Subscription..." className="pt-px" gap="gap-[7px]" items={[["Basic", "bg-[#118dff]"], ["Premium", "bg-[#12239e]"], ["Standard", "bg-[#d82a96]"]]} />
        </div>
      </Visual>

      <Visual place="left-[597px] top-[121px] h-[147px] w-[254px]" title={"REVENUE GENERATED BY\nSUBSCRIPTION TYPE"} center>
        <div className="mx-[6px] overflow-hidden">
          <table className="w-[290px] table-fixed border-collapse text-left text-[11px] leading-[16px] whitespace-nowrap text-[#252423]">
            <thead>
              <tr className="h-[25px] bg-white align-top">
                <th className="w-[130px] border-r border-[#5a5a5a] px-[4px] pt-px text-right font-normal">
                  <span className="block pr-[32px]">SubscriptionType</span>
                </th>
                <th className="px-[4px] pt-px font-normal">Count of subscrition type</th>
              </tr>
            </thead>
            <tbody>
              <tr className="h-[19px] border-b border-[#6f9fe8] bg-[#41a4ff]">
                <td className="border-r border-[#5a5a5a] px-[4px]">Basic</td>
                <td />
              </tr>
              <tr className="h-[18px] font-bold">
                <td className="border-r border-[#5a5a5a] px-[4px]">Total</td>
                <td />
              </tr>
            </tbody>
          </table>
        </div>
        <Scroll thumb="w-5/6" />
      </Visual>

      <Visual place="left-[857px] top-[118px] h-[145px] w-[255px]" title="MONTHLY REVENUE GENERATED" center>
        <table className="ml-[6px] w-[235px] table-fixed border-collapse text-left text-[11px] leading-[16px] text-[#252423]">
          <thead>
            <tr className="h-[26px] border-b border-[#41a4ff] bg-white align-top">
              <th className="w-[141px] border-r border-[#5a5a5a] px-[4px] pt-px font-normal">
                month
                <SortMark />
              </th>
              <th className="px-[4px] pt-px text-right font-normal whitespace-nowrap">Sum of Revenue</th>
            </tr>
          </thead>
          <tbody>
            {[["Sep", "3365221"], ["May", "6722629"], ["Jan", "6730122"]].map(([m, v], i) => (
              <tr key={m} className={i === 1 ? "h-[18px] bg-[#ebebeb]" : "h-[18px] bg-white"}>
                <td className="border-r border-[#5a5a5a] px-[4px]">{m}</td>
                <td className="px-[4px] text-right">{v}</td>
              </tr>
            ))}
            <tr className="h-[19px] border-t border-[#41a4ff] font-bold">
              <td className="border-r border-[#5a5a5a] px-[4px]">Total</td>
              <td className="px-[4px] text-right">16817972</td>
            </tr>
          </tbody>
        </table>
      </Visual>

      <Visual place="left-[14px] top-[270px] h-[109px] w-[238px]" title={"CANCELED SUBSCRIPTION BY\nTYPE, BASIC"} center>
        <div className="flex flex-1">
          <svg width="154" height="66" viewBox="0 0 154 66" role="img" aria-label="Cancelled, basic">
            <Arc cx={79} cy={31} r={19} w={10} color="#118dff" />
            <path d="M41 31h14" stroke="#b08aa4" />
            <text x="38" y="27" textAnchor="end" {...label}>5K</text>
            <text x="38" y="41" textAnchor="end" {...label}>(100%)</text>
          </svg>
          <Legend title="Subscriptio..." className="pt-[12px]" gap="gap-0" items={[["Basic", "bg-[#118dff]"]]} />
        </div>
      </Visual>
      <Visual place="left-[279px] top-[269px] h-[113px] w-[233px]" title={"CANCELED SUBSCRIPTION BY\nTYPE, STANDARD"} center>
        <div className="flex flex-1">
          <svg width="152" height="70" viewBox="0 0 152 70" role="img" aria-label="Cancelled, standard">
            <Arc cx={78} cy={32} r={20} w={10} color="#ae559e" />
          </svg>
          <Legend title="Subscriptio..." className="pt-[14px]" gap="gap-0" items={[["Standard", "bg-[#4b0058]"]]} />
        </div>
      </Visual>
      <Visual place="left-[524px] top-[269px] h-[111px] w-[219px]" title={"CANCELED SUBSCRIPTION\nBY TYPE, PREMIUM"} center>
        <div className="flex flex-1">
          <svg width="143" height="68" viewBox="0 0 143 68" role="img" aria-label="Cancelled, premium">
            <Arc cx={73} cy={32} r={20} w={10} color="#9464b9" />
          </svg>
          <Legend title="Subscripti..." className="pt-[13px]" gap="gap-0" items={[["Premi...", "bg-[#12239e]"]]} />
        </div>
      </Visual>

      <Visual place="left-[772px] top-[269px] h-[130px] w-[278px]" title={"NUMBER OF CANCELLATION BY\nREGION"}>
        <div className="mx-[6px] overflow-hidden">
          <table className="w-[300px] table-fixed border-collapse text-left text-[11px] leading-[16px] whitespace-nowrap text-[#252423]">
            <thead>
              <tr className="h-[26px] bg-white align-top">
                <th className="w-[56px] border-r border-[#f6dcec] px-[4px] pt-[2px] font-normal">Region</th>
                <th className="overflow-hidden px-[4px] pt-[2px] font-normal">
                  Sum of Number of Canceled Subscrirption
                  <SortMark />
                </th>
              </tr>
            </thead>
            <tbody>
              <tr className="h-[18px] border-b border-[#118dff] bg-[#41a4ff]">
                <td className="px-[4px]">North</td>
                <td className="pr-[20px] text-right">5067</td>
              </tr>
              <tr className="h-[18px] font-bold">
                <td className="px-[4px]">Total</td>
                <td className="pr-[20px] text-right">5067</td>
              </tr>
            </tbody>
          </table>
        </div>
        <Scroll thumb="w-[94%]" />
      </Visual>

      <Visual place="left-[20px] top-[381px] h-[204px] w-[338px]" title={"REVENUE GENERATED BY REGION BY\nSUBSCRIPTION TYPE"} body="bg-[#d82a96]">
        <table className="ml-[4px] w-[203px] table-fixed border-collapse text-left text-[11px] leading-[16px] text-[#252423]">
          <thead>
            <tr className="h-[26px] border-b border-[#118dff] bg-white align-top">
              <th className="w-[45px] border-r border-[#f3d3e7] px-[4px] pt-[2px] font-normal">Region</th>
              <th className="w-[79px] border-r border-[#f3d3e7] px-[5px] pt-[2px] font-normal">Basic</th>
              <th className="px-[4px] pt-[2px]">Total</th>
            </tr>
          </thead>
          <tbody>
            <tr className="h-[18px] bg-[#ebebeb]">
              <td className="border-r border-[#118dff] px-[4px]">North</td>
              <td className="border-r border-[#f3b3da] px-[4px] text-right">₦16,817,972</td>
              <td className="px-[3px] text-right font-bold">₦16,817,972</td>
            </tr>
            <tr className="h-[17px] bg-[#ec8fcb]">
              <td className="border-r border-[#118dff]" />
              <td className="border-r border-[#e569b8]" />
              <td />
            </tr>
            <tr className="h-[18px] bg-white font-bold">
              <td className="border-r border-[#118dff] px-[4px]">Total</td>
              <td className="border-r border-[#f3d3e7] px-[3px] text-right">₦16,817,972</td>
              <td className="px-[3px] text-right">₦16,817,972</td>
            </tr>
          </tbody>
        </table>
      </Visual>

      <Visual place="left-[379px] top-[434px] h-[151px] w-[285px]" title={"REVENUE GENERATED BY\nSUBSCRIPTION TYPE"} center>
        <table className="ml-[5px] w-[276px] table-fixed border-collapse text-left text-[11px] leading-[16px] text-[#252423]">
          <thead>
            <tr className="h-[25px] bg-white align-top">
              <th className="w-[129px] border-r border-[#8a6a80] px-[4px] pt-[2px] font-normal">SubscriptionType</th>
              <th className="px-[4px] pt-[2px] font-normal">
                Sum of Revenue
                <SortMark />
              </th>
            </tr>
          </thead>
          <tbody>
            <tr className="h-[19px] border-b border-[#118dff] bg-[#41a4ff]">
              <td className="border-r border-[#3a70b0] px-[4px]">Basic</td>
              <td className="px-[2px] text-right">16817972</td>
            </tr>
            <tr className="h-[17px] font-bold">
              <td className="border-r border-[#5a5a5a] px-[4px]">Total</td>
              <td className="px-[2px] text-right">16817972</td>
            </tr>
          </tbody>
        </table>
        <Scroll thumb="w-[98%]" />
      </Visual>

      <Visual place="left-[679px] top-[426px] h-[154px] w-[245px]" title={"NUMBER OF CANCELLATION BY\nREGION"}>
        <div className="flex items-center gap-[4px] pt-[5px] pl-[4px] text-[11px] leading-[16px] text-[#605e5c]">
          <b>Subscrip...</b>
          {[["Basic", "bg-[#118dff]"], ["Premium", "bg-[#12239e]"], ["Standard", "bg-[#4b0058]"]].map(([n, c]) => (
            <span key={n} className="flex items-center gap-[2px]">
              <span className={`size-[9px] rounded-full ${c}`} />
              {n}
            </span>
          ))}
        </div>
        <svg width="245" height="90" viewBox="0 0 245 90" role="img" aria-label="Cancellations by region">
          <path d="M50 11h190M50 37h190M50 63h190" stroke="#dba0c6" strokeDasharray="1 5" />
          <rect x="66" y="19" width="32" height="44" fill="#958fdf" />
          <rect x="108" y="19" width="32" height="44" fill="#9464b9" />
          <rect x="149" y="19" width="32" height="44" fill="#ae559e" />
          <rect x="191" y="19" width="32" height="44" fill="#118dff" />
          <g {...label} textAnchor="end">
            <text x="42" y="15">20M</text>
            <text x="42" y="41">10M</text>
            <text x="42" y="67">0M</text>
          </g>
          <g {...label} textAnchor="middle">
            <text x="83" y="78">East</text>
            <text x="124" y="78">South</text>
            <text x="166" y="78">West</text>
            <text x="208" y="78">North</text>
          </g>
          <text transform="translate(12 64) rotate(-90)" fontSize="9" fontFamily="Open Sans, sans-serif" fill="#252423">Sum of Rev...</text>
        </svg>
      </Visual>

      <Visual place="left-[941px] top-[420px] h-[160px] w-[160px]" title={"NUMBER OF\nSUBSCRITION\nCANCELLED WITHI..."} head="bg-[#0e6bc0]" body="bg-[#e044a7]">
        <Big>(Blank)</Big>
      </Visual>

      <div className="absolute top-[585px] right-[2px] left-[1px] border-t-2 border-dotted border-[#4a4a4a]" />

      <div className="absolute top-[80px] left-[473px] flex gap-[4px] text-[#605e5c]">
        {[
          ["Filters", <path key="f" d="M3 5h14M6 10h8M8 15h4" />],
          ["Focus mode", <path key="g" d="M9 3H5a2 2 0 0 0-2 2v11a2 2 0 0 0 2 2h10a2 2 0 0 0 2-2v-5M11 3h6v6M17 3l-8 8M3 11h6v7" />],
          ["More options", <path key="h" d="M3 10h2M9 10h2M15 10h2" strokeWidth="2" />],
        ].map(([n, d]) => (
          <button key={n as string} type="button" aria-label={n as string} className="flex h-[30px] w-[31px] items-center justify-center bg-white">
            <svg width="19" height="19" viewBox="0 0 20 20" fill="none" stroke="currentColor">{d}</svg>
          </button>
        ))}
      </div>

      <Visual place="left-[308px] top-[110px] h-[146px] w-[267px] outline-2 -outline-offset-1 outline-[#6b6b6b]" title="REVENUE GENERATED BY REGION">
        <div className="flex flex-1 pt-[2px] pl-[3px]">
          <svg width="203" height="118" viewBox="0 0 203 118" role="img" aria-label="Revenue by region">
            <Arc cx={102} cy={55} r={35} w={18} color="#958fdf" from={0} span={0.25} />
            <Arc cx={102} cy={55} r={35} w={18} color="#9464b9" from={0.25} span={0.25} />
            <Arc cx={102} cy={55} r={35} w={18} color="#e570bd" from={0.5} span={0.25} />
            <Arc cx={102} cy={55} r={35} w={18} color="#e66c37" from={0.75} span={0.25} />
            <path d="M73 9h10l3 5M132 9h-10l-3 5M73 102h10l3-5M132 102h-10l-3-5" fill="none" stroke="#b08aa4" />
            <text x="11" y="14" {...label}>₦16.... (24....)</text>
            <text x="135" y="14" {...label}>₦16.... (25....)</text>
            <text x="11" y="106" {...label}>₦16.... (24....)</text>
            <text x="135" y="106" {...label}>₦16.9... (25....)</text>
          </svg>
          <Legend title="Region" className="pt-[5px]" gap="gap-[6px]" items={[["East", "bg-[#958fdf]"], ["South", "bg-[#9464b9]"], ["West", "bg-[#e570bd]"], ["North", "bg-[#e66c37]"]]} />
        </div>
      </Visual>
      <div aria-hidden="true" className="absolute top-[103px] left-[302px] grid h-[159px] w-[280px] grid-cols-3 grid-rows-3">
        {["", "justify-self-center", "justify-self-end", "self-center", "opacity-0", "justify-self-end self-center", "self-end", "self-end justify-self-center", "self-end justify-self-end"].map((c, i) => (
          <span key={i} className={`size-[15px] rounded-full border border-[#6b6b6b] bg-white ${c}`} />
        ))}
      </div>
      <div className="absolute top-[110px] left-[584px] flex flex-col gap-[15px]">
        <button type="button" aria-label="Suggest a visual type" className="flex size-[35px] items-center justify-center rounded-[2px] bg-[#141414] shadow-md shadow-black/60">
          <svg width="26" height="26" viewBox="0 0 26 26" fill="none" stroke={LIGHT} strokeWidth="1.300">
            <path d="M4 14v11h6M10 25V2h6v23M16 25h7V7h-5v18" />
            <Bolt x={0} y={0} />
          </svg>
        </button>
        <button type="button" aria-label="Format visual" className="flex size-[35px] items-center justify-center rounded-[2px] bg-[#141414] shadow-md shadow-black/60">
          <svg width="26" height="26" viewBox="0 0 26 26" fill="none" strokeWidth="1.300">
            <path d="M10 14L21 3l2 2-9 12z" stroke={LIGHT} />
            <path d="M10 14l4 4c0 5-8 5-13 3 4-1 4-7 9-7z" fill={BLUE} stroke={SKY} />
            <path d="M20 15v10M15 20h10" stroke="#74d88a" strokeWidth="1.500" />
          </svg>
        </button>
      </div>
    </main>
  );
}

/* ---------- filters pane ---------- */

function FilterSection({ title, cards, className }: { title: string; cards: string[]; className: string }) {
  return (
    <section className={className}>
      <div className="flex items-center justify-between pr-[6px] text-[13px] leading-[20px]">
        <h3>{title}</h3>
        <button type="button" aria-label={`${title}: more`}>...</button>
      </div>
      <div className="mt-[11px] flex flex-col gap-[7px]">
        {cards.map((c) => (
          <button key={c} type="button" className="h-[57px] rounded-[2px] border border-[#c8c6c4] pb-[2px] pl-[11px] text-left text-[13px] leading-[22px]">
            <span className="block">{c}</span>
            <span className="block">is (All)</span>
          </button>
        ))}
        <button type="button" className="h-[57px] rounded-[2px] border border-[#3b3a39] text-[13px]">Add data fields here</button>
      </div>
    </section>
  );
}

function FiltersPane() {
  return (
    <aside aria-label="Filters" className="w-[251px] shrink-0 border-l border-[#b3b0ad] bg-white text-[#252423]">
      <div className="border-b border-[#b3b0ad] py-[5px] pt-[10px] pr-[15px] pl-[10px]">
        <label className="flex h-[38px] items-center rounded-[2px] border border-[#a19f9d] pb-[2px] pl-[15px]">
          <Lens size={15} />
          <input type="search" aria-label="Search filters" placeholder="Search" className="ml-[19px] min-w-0 flex-1 bg-transparent text-[14px] outline-none placeholder:text-[#252423]" />
        </label>
      </div>
      <div className="flex flex-col pr-[10px] pl-[10px]">
        <FilterSection className="mt-[20px]" title="Filters on this visual" cards={["Region", "Sum of Revenue"]} />
        <FilterSection className="mt-[34px]" title="Filters on this page" cards={[]} />
        <FilterSection className="mt-[34px]" title="Filters on all pages" cards={[]} />
      </div>
    </aside>
  );
}

/* ---------- build and data panes ---------- */

const PALETTE = [
  "Stacked bar chart", "Stacked column chart", "Clustered bar chart", "Clustered column chart", "100% stacked bar chart", "100% stacked column chart",
  "Line chart", "Area chart", "Stacked area chart", "100% stacked area chart", "Line and stacked column chart", "Line and clustered column chart",
  "Ribbon chart", "Waterfall chart", "Funnel", "Scatter chart", "Pie chart", "Donut chart",
  "Treemap", "Map", "Filled map", "Azure map", "Gauge", "Card",
  "Multi-row card", "KPI", "Slicer", "Table", "Matrix", "R script visual",
  "Python visual", "Key influencers", "Decomposition tree", "Q&A", "Narrative", "Metrics",
  "Paginated report", "New card", "New slicer", "More visuals",
];

function PaneHead({ title }: { title: string }) {
  return (
    <div className="flex items-center text-white">
      <h2 className="text-[19px] leading-[30px] font-bold">{title}</h2>
      <button type="button" aria-label={`${title} options`} className="mr-[16px] mb-[6px] ml-auto">
        <svg width="14" height="4" viewBox="0 0 14 4" fill="#fff"><circle cx="2" cy="2" r="1.400" /><circle cx="7" cy="2" r="1.400" /><circle cx="12" cy="2" r="1.400" /></svg>
      </button>
      <button type="button" aria-label={`Collapse ${title}`} className="mb-[6px]">
        <svg width="10" height="10" viewBox="0 0 10 10" fill="none" stroke="#fff" strokeWidth="1.200"><path d="M1 1l4 4-4 4M5 1l4 4-4 4" /></svg>
      </button>
    </div>
  );
}

function Well({ name, field }: { name: string; field?: string }) {
  return (
    <section className="flex flex-col">
      <h3 className="mt-[10px] text-[14px] leading-[22px]">{name}</h3>
      <div className="mt-[5px] flex flex-col gap-[3px] rounded-[2px] border border-dashed border-[#9a9a9a] p-[4px]">
        {field && (
          <div className="flex h-[38px] items-center rounded-[2px] border border-[#9a9a9a] bg-[#292929] pl-[7px] text-[14px] whitespace-nowrap">
            {field}
            <button type="button" aria-label={`Remove ${field}`} className="ml-auto px-[12px]"><Cross size={11} /></button>
            <button type="button" aria-label={`${field} options`} className="flex h-[22px] w-[36px] items-center justify-center border-l border-[#6a6a6a]"><Chevron dir="right" size={11} /></button>
          </div>
        )}
        <button type="button" className="h-[38px] rounded-[2px] border border-[#9a9a9a] bg-[#1d1d1d] text-[14px] font-bold">+Add data</button>
      </div>
    </section>
  );
}

function BuildPane() {
  return (
    <aside aria-label="Build" className="w-[226px] shrink-0 border-l border-[#6a6a6a] bg-[#141414] pt-[10px] pr-[10px] pl-[10px] text-white">
      <div className="pr-[3px]"><PaneHead title="Build" /></div>
      <h3 className="mt-[7px] text-[14px] leading-[22px]">Suggestions</h3>
      <div className="mt-[3px] grid h-[234px] grid-cols-6 rounded-[2px] border border-[#8a8a8a] bg-black px-[4px] py-[2px]">
        {PALETTE.map((v) => (
          <button
            key={v}
            type="button"
            aria-label={v}
            className={v === "Donut chart" ? "m-auto flex h-[30px] w-[30px] items-center justify-center border border-white" : "m-auto flex h-[30px] w-[30px] items-center justify-center"}
          >
            <VisualIcon name={v} size={23} />
          </button>
        ))}
      </div>
      <Well name="Legend" field="Region" />
      <Well name="Values" field="Sum of Revenue" />
      <Well name="Details" />
      <Well name="Tooltips" />
    </aside>
  );
}

function DataPane() {
  const tables = ["Lita Customer Subscri...", "sales data pivot table", "Sheet1 (2)", "Sheet1 (3)", "Sheet1 (4)"];
  return (
    <aside aria-label="Data" className="w-[227px] shrink-0 border-l border-[#6a6a6a] bg-[#141414] pt-[10px] pr-[6px] pl-[5px] text-white">
      <div className="pr-[8px] pl-[6px]"><PaneHead title="Data" /></div>
      <label className="mt-[17px] flex h-[30px] items-center rounded-[4px] border border-[#7a7a7a] bg-[#242424] pl-[15px] text-[#b0b0b0]">
        <Lens size={18} />
        <input type="search" aria-label="Search data" placeholder="Search" className="ml-[9px] min-w-0 flex-1 bg-transparent text-[16px] outline-none placeholder:text-[#9a9a9a]" />
      </label>
      <ul className="mt-[11px]">
        {tables.map((t, i) => (
          <li key={t}>
            <button type="button" className="flex h-[30px] w-full items-center pl-[12px] text-[14px] whitespace-nowrap">
              <Chevron dir="right" size={12} />
              <span className="relative ml-[7px] mr-[7px]">
                <svg width="16" height="16" viewBox="0 0 16 16" fill="none" stroke={LIGHT} strokeWidth="1.300">
                  <rect x="1" y="1" width="14" height="14" rx="2.500" />
                  <path d="M1 5h14M1 11h14M5 1v14M11 1v14" />
                </svg>
                {i === 0 && (
                  <svg width="14" height="14" viewBox="0 0 14 14" className="absolute -right-[7px] -bottom-[7px]">
                    <circle cx="7" cy="7" r="7" fill="#000" />
                    <path d="M4 7l2 2 4-4" fill="none" stroke="#fff" strokeWidth="1.500" />
                  </svg>
                )}
              </span>
              {t}
            </button>
          </li>
        ))}
      </ul>
    </aside>
  );
}

function RightRail() {
  return (
    <nav aria-label="Panes" className="flex w-[40px] shrink-0 flex-col border-l border-[#6a6a6a] bg-[#292929]">
      <button type="button" aria-label="Data pane" className="flex h-[40px] items-center justify-center border border-l-0 border-[#6a6a6a] bg-[#333]">
        <svg width="20" height="24" viewBox="0 0 20 24" fill="none" stroke={LIGHT} strokeWidth="1.300"><ellipse cx="10" cy="4" rx="8.500" ry="3" /><path d="M1.500 4v16c0 3 17 3 17 0V4" /></svg>
      </button>
      <button type="button" aria-label="Build pane" className="flex h-[40px] items-center justify-center border border-l-0 border-[#6a6a6a] bg-[#333]">
        <svg width="24" height="25" viewBox="0 0 24 25" fill="none" stroke={GREY} strokeWidth="1.300">
          <path d="M1 9h6v14H1zM7 9V1h6v22H7zM13 6h6v3" />
          <path d="M13 12v10c0 3 10 3 10 0V12" fill="#333" stroke="#f0a848" />
          <ellipse cx="18" cy="12" rx="5" ry="2" fill="#333" stroke="#f0a848" />
        </svg>
      </button>
      <button type="button" aria-label="Format pane" className="flex h-[40px] items-center justify-center bg-[#1d1d1d]">
        <svg width="24" height="25" viewBox="0 0 24 25" fill="none" stroke={GREY} strokeWidth="1.300">
          <path d="M1 20V9h6v13M7 9V1h6v12M13 6h6v2" />
          <path d="M12 17L22 8l1 2-8 10z" stroke={LIGHT} />
          <path d="M11 17l4 3c0 4-6 4-11 3 3-1 3-6 7-6z" fill={BLUE} stroke={SKY} />
        </svg>
      </button>
      <button type="button" aria-label="Add pane" className="flex h-[40px] items-center justify-center bg-[#1d1d1d]">
        <svg width="22" height="22" viewBox="0 0 22 22" stroke="#fff" strokeWidth="1.600"><path d="M11 0v22M0 11h22" /></svg>
      </button>
      <button type="button" aria-label="Settings" className="mt-auto flex h-[40px] items-center justify-center border-t border-[#6a6a6a] bg-[#1d1d1d]">
        <svg width="25" height="25" viewBox="0 0 24 24" fill="none" stroke={LIGHT} strokeWidth="1.200">
          <circle cx="12" cy="12" r="3.500" />
          <path d="M10 1h4l1 4 2 1 4-1 2 3-3 3v2l3 3-2 3-4-1-2 1-1 4h-4l-1-4-2-1-4 1-2-3 3-3v-2L1 8l2-3 4 1 2-1z" />
        </svg>
      </button>
    </nav>
  );
}

function PageTabs() {
  return (
    <nav aria-label="Report pages" className="flex h-[44px] shrink-0 bg-[#292929] text-[14px] whitespace-nowrap text-white">
      <div className="flex w-[160px] items-start border-r border-[#6a6a6a]">
        <button type="button" aria-label="Desktop layout" className="ml-[13px] mt-[9px] flex flex-col items-center">
          <svg width="20" height="20" viewBox="0 0 20 20" fill="none" stroke="#fff" strokeWidth="1.600"><rect x="1" y="1" width="18" height="13" rx="2" /><path d="M7 14v4M13 14v4M4 18h12" /></svg>
          <span className="mt-[6px] h-[3px] w-[30px] rounded-full bg-[#2aac94]" />
        </button>
        <button type="button" aria-label="Mobile layout" className="mt-[7px] ml-[32px]">
          <svg width="14" height="23" viewBox="0 0 14 23" fill="none" stroke="#e0e0e0" strokeWidth="1.600"><rect x="1" y="1" width="12" height="21" rx="2" /><path d="M5 18h4" /></svg>
        </button>
        <button type="button" aria-label="Previous page" className="mt-[16px] ml-[27px]">
          <svg width="8" height="11" viewBox="0 0 8 11" fill="none" stroke="#d0d0d0"><path d="M7 1v9L1 5.500z" /></svg>
        </button>
        <button type="button" aria-label="Next page" className="mt-[16px] ml-[19px]">
          <svg width="8" height="11" viewBox="0 0 8 11" fill="none" stroke="#d0d0d0"><path d="M1 1v9l6-4.500z" /></svg>
        </button>
      </div>
      <a href="#sales" className="flex w-[238px] items-center justify-center border-r border-[#404040]">SALES DATA VISUALIZATION</a>
      <a href="#customer" aria-current="page" className="flex w-[276px] items-center justify-center border-b-[5px] border-[#2aac94] pt-[5px] font-bold">CUSTOMER SUBSCRIPTION DATA</a>
      <button type="button" aria-label="New page" className="flex w-[50px] items-center justify-center border-l border-[#1c5a4f] bg-[#2aac94] pb-[4px]">
        <svg width="14" height="14" viewBox="0 0 14 14" stroke="#141414" strokeWidth="3"><path d="M7 0v14M0 7h14" /></svg>
      </button>
    </nav>
  );
}

function StatusBar() {
  return (
    <footer className="flex h-[30px] shrink-0 items-center border-t border-[#6a6a6a] bg-[#141414] pl-[5px] pr-[24px] text-[14px] text-[#d6d6d6]">
      <span>Page 2 of 2</span>
      <div className="ml-auto flex items-center">
        <button type="button" aria-label="Zoom out" className="mr-[6px] font-bold">-</button>
        <input
          type="range"
          aria-label="Zoom"
          min={0}
          max={100}
          defaultValue={32}
          className="h-[14px] w-[125px] appearance-none bg-[linear-gradient(#d0d0d0,#d0d0d0),linear-gradient(#d0d0d0,#d0d0d0)] bg-[length:100%_1px,1px_8px] bg-center bg-no-repeat [&::-webkit-slider-thumb]:h-[13px] [&::-webkit-slider-thumb]:w-[5px] [&::-webkit-slider-thumb]:appearance-none [&::-webkit-slider-thumb]:bg-[#e0e0e0]"
        />
        <button type="button" aria-label="Zoom in" className="ml-[6px]">
          <svg width="10" height="10" viewBox="0 0 10 10" stroke="#e0e0e0" strokeWidth="1.700"><path d="M5 0v10M0 5h10" /></svg>
        </button>
        <span className="ml-[17px] w-[31px]">70%</span>
        <button type="button" aria-label="Fit to page" className="ml-[22px]">
          <svg width="18" height="14" viewBox="0 0 18 14" fill="none" stroke="#e0e0e0" strokeWidth="1.300"><rect x="1" y="1" width="16" height="12" rx="1" /><path d="M7 4H4v2M11 4h3v2M7 10H4V8M11 10h3V8" /></svg>
        </button>
      </div>
    </footer>
  );
}

/* ---------- taskbar ---------- */

function office(letter: string, tile: string, a: string, b: string, c: string, round?: boolean) {
  return (
    <>
      {round ? (
        <>
          <circle cx="17" cy="16" r="14" fill={c} />
          <path d="M17 2a14 14 0 0 1 14 14H17z" fill={a} />
          <path d="M17 2v14H3A14 14 0 0 1 17 2z" fill={b} />
        </>
      ) : (
        <>
          <rect x="7" y="2" width="23" height="28" rx="2" fill={c} />
          <path d="M7 16V4a2 2 0 0 1 2-2h19a2 2 0 0 1 2 2v5H7z" fill={a} />
          <path d="M7 9h23v8H7z" fill={b} />
        </>
      )}
      <rect x="1" y="8" width="16" height="16" rx="2" fill={tile} />
      <text x="9" y="21" textAnchor="middle" fontSize="13" fontWeight="700" fontFamily="Open Sans, sans-serif" fill="#fff">{letter}</text>
    </>
  );
}

const APPS: [string, React.ReactNode, string?][] = [
  ["Task view", <g key="1"><path d="M2 9h20v20H2z" fill="#6d6d6d" /><path d="M10 3h20v20H10z" fill="#f0f0f0" /><path d="M10 9h12v14H10z" fill="#b5b5b5" /></g>],
  ["Chat", <g key="2"><path d="M16 2a14 14 0 1 1-5 27l-8 2 2-8A14 14 0 0 1 16 2z" fill="#6561c8" /><path d="M16 2a14 14 0 0 1 14 14c0 5-3 9-6 11z" fill="#7c86e0" /><rect x="8" y="10" width="11" height="12" rx="2" fill="#fff" /><path d="M20 14l4-3v10l-4-3z" fill="#fff" /></g>],
  ["File Explorer", <g key="3"><path d="M1 4h10l3 3v6H1z" fill="#e0a008" /><path d="M1 8h29v21H1z" fill="#ffd257" /><path d="M6 22c0-2 1-3 3-3h13c2 0 3 1 3 3v8H6z" fill="#1277c9" /><path d="M11 24h9" stroke="#0a4a85" strokeWidth="2" /></g>, "dot"],
  ["Reddit", <g key="4"><circle cx="16" cy="16" r="13" fill="#ff4500" /><ellipse cx="16" cy="18" rx="8.500" ry="6" fill="#fff" /><circle cx="21" cy="8" r="1.800" fill="#fff" /><circle cx="8" cy="15" r="2.200" fill="#fff" /><circle cx="24" cy="15" r="2.200" fill="#fff" /><path d="M16 12l1.500-5 3.500 1" stroke="#fff" fill="none" /><circle cx="13" cy="17" r="1.600" fill="#ff4500" /><circle cx="19" cy="17" r="1.600" fill="#ff4500" /><path d="M13 21c2 1.300 4 1.300 6 0" stroke="#222" fill="none" /></g>],
  ["Microsoft Store", <g key="5"><path d="M2 7h28v20a4 4 0 0 1-4 4H6a4 4 0 0 1-4-4z" fill="#f2f2f2" /><path d="M9 8V3h14v5" fill="none" stroke="#39b6f0" strokeWidth="2" /><path d="M10 12h5v5h-5z" fill="#f25022" /><path d="M17 12h5v5h-5z" fill="#7fba00" /><path d="M10 19h5v5h-5z" fill="#00a4ef" /><path d="M17 19h5v5h-5z" fill="#ffb900" /></g>],
  ["Edge", <g key="6"><circle cx="16" cy="16" r="15" fill="#1473c8" /><path d="M1 15C2 6 9 1 16 1c9 0 15 6 15 12 0 5-4 8-8 8-3 0-4-1-4-2s2-2 1-5c-1-2-4-3-7-3-5 0-10 1-12 4z" fill="#35c1e0" /><path d="M18 1c8 1 13 7 13 12 0 5-4 8-8 8-3 0-4-1-4-2s2-2 1-5c7 0 6-8-2-13z" fill="#5bd46a" /><path d="M12 13c-3 6 1 13 9 14 3 0 6-1 8-3-3 5-8 7-13 7C9 30 6 20 12 13z" fill="#0c4a94" /></g>, "dot"],
  ["Microsoft 365", <g key="7"><path d="M16 1l12 7v8H17l-7 9-6-3V9z" fill="#4a8fe8" /><path d="M16 1L4 8v15l7 3 2-13 7-4z" fill="#a07be8" /><path d="M28 8v16l-12 7-9-5 10-3 4-6V9z" fill="#3d56c8" /><path d="M28 16v8l-12 7-9-5 9-1z" fill="#b56be0" /><path d="M12 12l4-2 5 3v6l-5 3-4-3z" fill="#1f1f1f" /></g>],
  ["Word", <g key="8">{office("W", "#185abd", "#41a5ee", "#2b7cd3", "#1a4fa8")}</g>],
  ["PowerPoint", <g key="9">{office("P", "#c43e1c", "#ff8f6b", "#ed6c47", "#d35230", true)}</g>],
  ["Opera", <g key="10"><ellipse cx="16" cy="16" rx="10.500" ry="12" fill="none" stroke="#ff1b2d" strokeWidth="6" /><path d="M16 2c14 0 17 14 14 20-3 7-9 8-14 8 12-3 12-25 0-28z" fill="#ff4a4a" /></g>, "opera"],
  ["Excel", <g key="11">{office("X", "#107c41", "#33c481", "#21a366", "#185c37")}</g>],
  ["Visual Studio Code", <g key="12"><path d="M23 1v9L4 25l-3-3v-2z" fill="#0065a9" /><path d="M23 31v-9L4 7l-3 3v2z" fill="#007acc" /><path d="M23 1l8 4v22l-8 4z" fill="#2aa5f5" /></g>],
  ["Power BI Desktop", <g key="13"><path d="M16 1h12v30H16z" fill="#d99b0c" /><path d="M10 9h12v22H10z" fill="#f0c53c" /><path d="M4 17h12v14H4z" fill="#ffe18a" /></g>, "powerbi"],
];

function Taskbar() {
  return (
    <footer className="grid h-[60px] shrink-0 grid-cols-[1fr_auto_1fr] items-center bg-[#202020] text-white">
      <button type="button" aria-label="Widgets" className="ml-[20px] w-[32px]">
        <svg width="31" height="28" viewBox="0 0 31 28"><rect width="31" height="28" rx="2" fill="#0a63bd" /><rect x="3" y="3" width="12" height="22" fill="#fff" /><rect x="17" y="3" width="11" height="12" fill="#5ac8fa" /><rect x="17" y="17" width="11" height="8" fill="#1f8fef" /></svg>
      </button>
      <div className="flex items-center">
        <button type="button" aria-label="Start" className="flex w-[55px] justify-center pl-[2px]">
          <svg width="30" height="30" viewBox="0 0 30 30"><defs><linearGradient id="win" x1="0" y1="0" x2="1" y2="1"><stop offset="0" stopColor="#7fe0ff" /><stop offset="1" stopColor="#0a8cf0" /></linearGradient></defs><path d="M0 0h14v14H0zM15.500 0H30v14H15.500zM0 15.500h14V30H0zM15.500 15.500H30V30H15.500z" fill="url(#win)" /></svg>
        </button>
        <label className="mr-[6px] ml-[4px] flex h-[40px] w-[273px] items-center rounded-full bg-[#383838] pl-[15px] text-[#e8e8e8]">
          <Lens size={19} flip />
          <input type="search" aria-label="Search Windows" placeholder="Search" className="ml-[12px] w-[100px] flex-1 bg-transparent text-[16px] outline-none placeholder:text-[#d0d0d0]" />
          <svg width="64" height="34" viewBox="0 0 64 34" className="mr-[4px]" aria-hidden="true">
            <path d="M1 22c10 0 50-1 62 0-3 7-14 11-31 11S4 29 1 22z" fill="#4fb7e8" />
            <path d="M4 21c5-7 14-8 20-5 8-5 24-5 37 5-6 5-14 3-22 4s-26 1-35-4z" fill="#e07b3c" />
            <path d="M4 21c5-7 14-8 20-5 5 2 3 7-2 8-7 0-14-1-18-3z" fill="#8fb04a" />
            <path d="M14 8v12M24 6v12M33 8v10M42 5v14M51 9v10" stroke="#7a4a2a" strokeWidth="1.500" />
            <g fill="#4f8f3a"><ellipse cx="14" cy="8" rx="5" ry="6" /><ellipse cx="23" cy="6" rx="4" ry="6" /><ellipse cx="42" cy="6" rx="5" ry="6" /><ellipse cx="51" cy="9" rx="4.500" ry="6" /></g>
            <ellipse cx="33" cy="8" rx="4" ry="6" fill="#d98b3a" />
            <path d="M14 28h34M22 31h20" stroke="#b8ecff" />
          </svg>
        </label>
        {APPS.map(([name, art, state]) => (
          <button
            key={name}
            type="button"
            aria-label={name}
            className={
              state === "opera"
                ? "relative mx-[3px] flex h-[50px] w-[49px] items-center justify-center rounded-[4px] bg-[#4a2a2c]"
                : state === "powerbi"
                  ? "relative mx-[3px] flex h-[50px] w-[49px] items-center justify-center rounded-[4px] border border-[#3a3a3a] bg-[#2d2d2d]"
                  : "relative mx-[3px] flex h-[50px] w-[49px] items-center justify-center"
            }
          >
            <svg width="30" height="30" viewBox="0 0 32 32" aria-hidden="true">{art}</svg>
            {state && (
              <span
                className={
                  state === "powerbi"
                    ? "absolute bottom-0 h-[4px] w-[20px] rounded-full bg-[#4cc2ff]"
                    : state === "opera"
                      ? "absolute bottom-0 h-[4px] w-[8px] rounded-full bg-[#ff99a4]"
                      : "absolute bottom-0 h-[4px] w-[8px] rounded-full bg-[#9a9a9a]"
                }
              />
            )}
          </button>
        ))}
      </div>
      <div className="flex items-center justify-end pr-[24px] text-[14px]">
        <button type="button" aria-label="Hidden icons" className="mr-[11px]">
          <svg width="17" height="10" viewBox="0 0 17 10" fill="none" stroke="#fff" strokeWidth="1.300"><path d="M1 9l7.500-8L16 9" /></svg>
        </button>
        <svg width="21" height="21" viewBox="0 0 21 21" className="mr-[15px]" aria-hidden="true">
          <circle cx="10" cy="10" r="10" fill="#3fa044" /><circle cx="10" cy="10" r="8" fill="#f2d648" /><path d="M10 5v10M5 10h10" stroke="#2e8b3a" strokeWidth="3" /><circle cx="16" cy="16" r="4" fill="#e32b2b" />
        </svg>
        <svg width="21" height="16" viewBox="0 0 21 16" fill="none" stroke="#fff" strokeWidth="1.200" className="mr-[23px]" aria-hidden="true">
          <rect x="1" y="1" width="19" height="14" rx="2" /><path d="M4 5h2M8 5h2M12 5h2M16 5h1M4 8h2M8 8h2M12 8h2M16 8h1M6 12h9" />
        </svg>
        <span className="mr-[22px]">ENG</span>
        <svg width="21" height="21" viewBox="0 0 21 21" fill="none" stroke="#fff" strokeWidth="1.200" className="mr-[9px]" aria-hidden="true">
          <path d="M10 19a9 9 0 1 1 9-9M10 1c-5 5-5 13 0 18M10 1c3 3 4 6 4 9M2 7h16M2 13h9" /><circle cx="15.500" cy="15.500" r="4.500" /><path d="M12.500 18.500l6-6" />
        </svg>
        <svg width="20" height="16" viewBox="0 0 20 16" fill="none" stroke="#fff" strokeWidth="1.200" className="mr-[10px]" aria-hidden="true">
          <path d="M1 5h3l5-4v14l-5-4H1zM13 5l6 6M19 5l-6 6" />
        </svg>
        <svg width="21" height="14" viewBox="0 0 21 14" fill="none" stroke="#fff" strokeWidth="1.300" className="mr-[17px]" aria-hidden="true">
          <rect x="1" y="1" width="17" height="12" rx="3" /><path d="M20 5v4" strokeWidth="2" /><path d="M3.500 3.500h4v7h-4z" fill="#fff" />
        </svg>
        <span className="mr-[14px] text-right leading-[20px]">00:02<br />07/11/2024</span>
        <span className="flex size-[20px] items-center justify-center rounded-full bg-[#4cc2ff] text-[12px] text-black">1</span>
      </div>
    </footer>
  );
}

export default function App() {
  return (
    <div className="flex h-screen min-h-[1080px] flex-col overflow-hidden bg-[#141414] font-['Open_Sans','Noto_Sans',sans-serif]">
      <TitleBar />
      <TabStrip />
      <Ribbon />
      <div className="flex min-h-0 flex-1">
        <LeftNav />
        <div className="flex min-w-0 flex-1 flex-col">
          <div role="status" className="flex h-[47px] shrink-0 items-center border border-[#a0a0a0] bg-[#292929] pl-[17px] text-[14px] text-white">
            <svg width="16" height="16" viewBox="0 0 16 16" fill="none" stroke="#fff" strokeWidth="1.300"><circle cx="8" cy="8" r="7" /><path d="M8 7v5M8 4v1.500" /></svg>
            <span className="ml-[12px]">Auto recovery contains some recovered files that haven't been opened.</span>
            <button type="button" className="mr-[14px] ml-auto h-[30px] w-[178px] border border-[#b0b0b0] font-bold">View recovered files</button>
            <button type="button" aria-label="Dismiss" className="mr-[14px]"><Cross /></button>
          </div>
          <div className="flex min-h-0 flex-1">
            <Canvas />
            <FiltersPane />
          </div>
          <PageTabs />
        </div>
        <BuildPane />
        <DataPane />
        <RightRail />
      </div>
      <StatusBar />
      <Taskbar />
    </div>
  );
}
